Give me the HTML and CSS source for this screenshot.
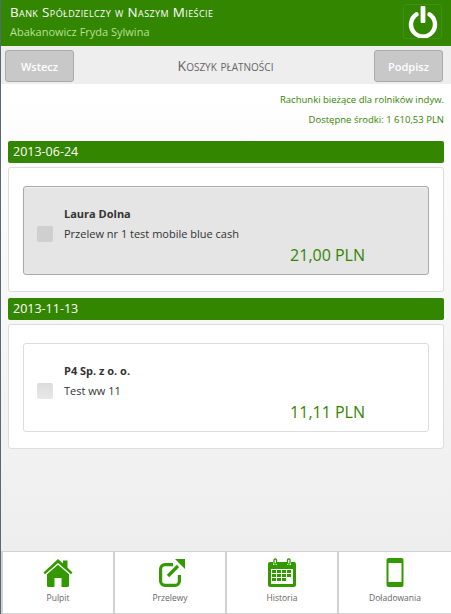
FILE: index.html
```html
<!DOCTYPE html>
<html lang="en">
<head>
    <meta charset="UTF-8">
    <title>Koszyk płatności</title>
    <link rel="stylesheet" href="styles.css">
</head>
<body>

<div class="page">
    <!-- Header -->
    <div class="header">
        <div class="header-text">
            <div class="bank-name">Bank Spółdzielczy w Naszym Mieście</div>
            <div class="user-name">Abakanowicz Fryda Sylwina</div>
        </div>
        <div class="logout">
            <svg width="30" height="32" viewBox="0 0 30 32">
                <path d="M8.5 8.4a12 12 0 1 0 13 0" fill="none" stroke="#fff" stroke-width="4.4" stroke-linecap="round"/>
                <rect x="12.6" y="0" width="4.8" height="17" rx="1" fill="#fff"/>
            </svg>
        </div>
    </div>

    <!-- Toolbar -->
    <div class="toolbar">
        <button class="btn">Wstecz</button>
        <div class="title">Koszyk płatności</div>
        <button class="btn">Podpisz</button>
    </div>

    <div class="content">
        <div class="account">
            <p>Rachunki bieżące dla rolników indyw.</p>
            <p>Dostępne środki: 1 610,53 PLN</p>
        </div>

        <div class="date-bar first">2013-06-24</div>
        <div class="group">
            <div class="item selected">
                <div class="check"></div>
                <div class="item-body">
                    <div class="item-name">Laura Dolna</div>
                    <div class="item-desc">Przelew nr 1 test mobile blue cash</div>
                    <div class="item-amount">21,00 PLN</div>
                </div>
            </div>
        </div>

        <div class="date-bar">2013-11-13</div>
        <div class="group">
            <div class="item">
                <div class="check"></div>
                <div class="item-body">
                    <div class="item-name">P4 Sp. z o. o.</div>
                    <div class="item-desc">Test ww 11</div>
                    <div class="item-amount">11,11 PLN</div>
                </div>
            </div>
        </div>
    </div>

    <!-- Bottom menu -->
    <div class="nav">
        <div class="nav-item">
            <svg width="30" height="30" viewBox="0 0 30 30">
                <path d="M15 1 20 5.5V2.5H24.5V9.8L29.5 14.5 28 16.3 15 5 2 16.3 .5 14.5Z" fill="#339900"/>
                <path d="M15 6.8 26 16.3V27.5A1.5 1.5 0 0 1 24.5 29H18.5V20H11.5V29H5.5A1.5 1.5 0 0 1 4 27.5V16.3Z" fill="#339900"/>
            </svg>
            <span>Pulpit</span>
        </div>
        <div class="nav-item">
            <svg width="30" height="30" viewBox="0 0 30 30">
                <path d="M18 6.6H10A4.5 4.5 0 0 0 5.6 11V23A4.5 4.5 0 0 0 10 27.4H20A4.5 4.5 0 0 0 24.4 23V17" fill="none" stroke="#339900" stroke-width="3.2"/>
                <path d="M13 18 23 8" fill="none" stroke="#339900" stroke-width="3.2"/>
                <path d="M20 1H30V11Z" fill="#339900"/>
            </svg>
            <span>Przelewy</span>
        </div>
        <div class="nav-item">
            <svg width="30" height="30" viewBox="0 0 30 30">
                <path d="M3 4H6V7H10V4H20V7H24V4H27A2 2 0 0 1 29 6V27A2 2 0 0 1 27 29H3A2 2 0 0 1 1 27V6A2 2 0 0 1 3 4Z" fill="#339900"/>
                <rect x="7" y="1" width="2.5" height="5" rx="1" fill="none" stroke="#339900" stroke-width="1.3"/>
                <rect x="20.5" y="1" width="2.5" height="5" rx="1" fill="none" stroke="#339900" stroke-width="1.3"/>
                <rect x="4" y="11" width="22" height="15" fill="#fff"/>
                <path d="M5 12h4v3H5zM10 12h4v3h-4zM15 12h4v3h-4zM20 12h4v3h-4zM5 16h4v3H5zM10 16h4v3h-4zM15 16h4v3h-4zM20 16h4v3h-4zM5 20h4v3H5zM10 20h4v3h-4zM15 20h4v3h-4z" fill="#339900"/>
            </svg>
            <span>Historia</span>
        </div>
        <div class="nav-item">
            <svg width="30" height="30" viewBox="0 0 30 30">
                <rect x="6.5" y="0" width="17" height="29" rx="2" fill="#339900"/>
                <rect x="8.5" y="5" width="13" height="19" fill="#fff"/>
            </svg>
            <span>Doładowania</span>
        </div>
    </div>
</div>

</body>
</html>
```
FILE: styles.css
```css
html, body {
    margin: 0;
    padding: 0;
    height: 100%;
}
body {
    font-family: "Open Sans", Tahoma, sans-serif;
    font-size: 10px;
    color: #333;
    background-color: #eee;
    overflow: hidden;
}
.page {
    height: 614px;
    display: flex;
    flex-direction: column;
    border-left: 1px solid #56697a;
    box-sizing: border-box;
}

/* Header */
.header {
    height: 46px;
    flex: none;
    background-color: #338600;
    display: flex;
    justify-content: space-between;
    box-sizing: border-box;
    padding: 0 9px 0 9px;
}
.bank-name {
    font-size: 13.4px;
    letter-spacing: 0.4px;
    font-variant: small-caps;
    color: #fff;
    margin-top: 3px;
    line-height: 18px;
}
.user-name {
    font-size: 11px;
    color: #b9e09c;
    margin-top: 2px;
    line-height: 18px;
}
.logout {
    width: 37px;
    height: 33px;
    margin-top: 4px;
    border: 1px solid #3f9110;
    border-radius: 3px;
    display: flex;
    align-items: center;
    justify-content: center;
}

/* Toolbar */
.toolbar {
    height: 38px;
    flex: none;
    background-color: #eee;
    display: flex;
    align-items: center;
    justify-content: space-between;
    padding: 0 8px 0 4px;
}
.btn {
    width: 69px;
    height: 32px;
    margin-top: 2px;
    background-color: #c8c8c8;
    border: 1px solid #aaa;
    border-radius: 3px;
    color: #fff;
    font-family: inherit;
    font-size: 11px;
    font-weight: 600;
    padding: 0;
}
.title {
    font-size: 14px;
    font-variant: small-caps;
    color: #666;
    margin-left: 3px;
}

/* Content */
.content {
    flex: 1;
    background: linear-gradient(#fff, #eee);
    padding: 0 7px 0 7px;
}
.account {
    text-align: right;
    font-size: 9.5px;
    color: #338600;
}
.account p {
    margin: 0;
    line-height: 20px;
}
.account p:first-child {
    margin-top: 6px;
}
.date-bar {
    height: 22px;
    line-height: 21px;
    background-color: #338600;
    border-radius: 2px;
    color: #fff;
    font-size: 12.5px;
    padding-left: 5px;
    box-sizing: border-box;
    margin-top: 6px;
}
.date-bar.first {
    margin-top: 11px;
}
.group {
    background-color: #fff;
    border: 1px solid #ddd;
    border-radius: 3px;
    margin-top: 4px;
    padding: 18px 14px 16px;
}
.item {
    height: 89px;
    border: 1px solid #ddd;
    border-radius: 3px;
    box-sizing: border-box;
    display: flex;
    align-items: center;
    padding-left: 13px;
}
.item.selected {
    background-color: #e5e5e5;
    border-color: #aaa;
    box-shadow: inset 0 5px 0 -4px #f2f2f2;
}
.check {
    width: 16px;
    height: 16px;
    flex: none;
    margin-top: 6px;
    background: linear-gradient(#dcdcdc, #e8e8e8);
    border-radius: 2px;
}
.selected .check {
    background: #cfcfcf;
}
.item-body {
    flex: 1;
    margin-left: 11px;
    margin-top: 8px;
}
.item-name {
    font-size: 11px;
    font-weight: 700;
    line-height: 20px;
}
.item-desc {
    font-size: 11px;
    line-height: 20px;
}
.item-amount {
    font-size: 16px;
    color: #338600;
    text-align: right;
    line-height: 22px;
    padding-right: 63px;
}

/* Bottom menu */
.nav {
    height: 63px;
    flex: none;
    display: grid;
    grid-template-columns: 110px 110px 110px 1fr;
    gap: 2px;
    background-color: #d2d2d2;
    padding: 1px 0 1px 2px;
    box-sizing: border-box;
}
.nav-item {
    background-color: #fff;
    display: flex;
    flex-direction: column;
    align-items: center;
    padding-top: 6px;
    box-sizing: border-box;
    font-size: 8.5px;
    color: #666;
}
.nav-item span {
    margin-top: 4px;
}
```
